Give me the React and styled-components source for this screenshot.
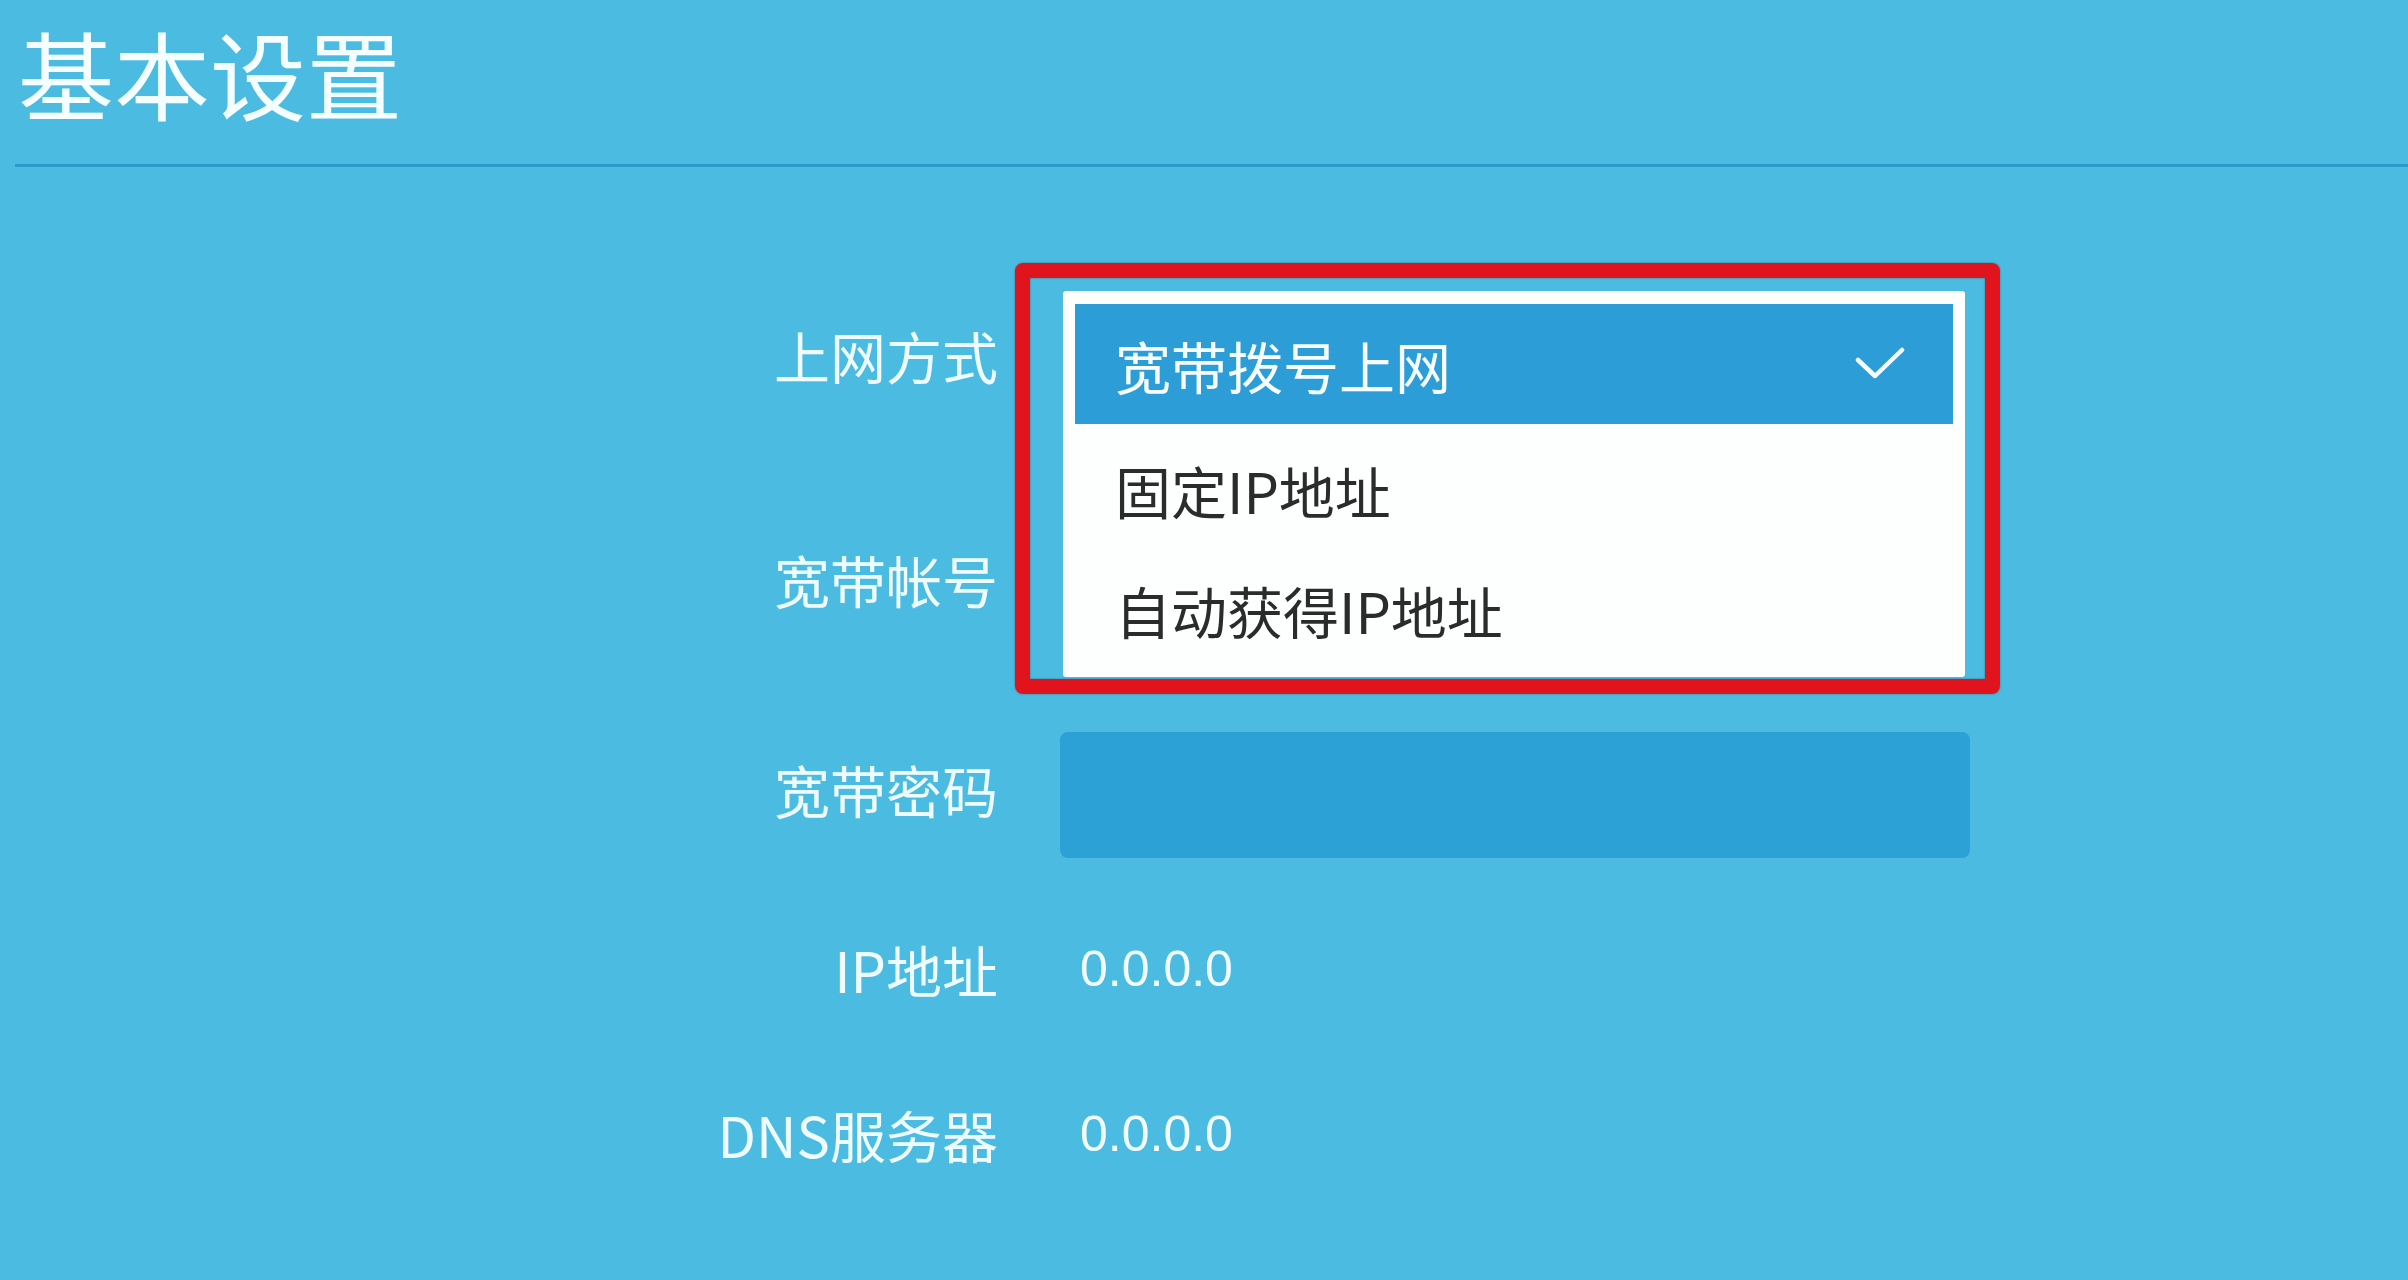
import React from 'react'
import styled, { createGlobalStyle } from 'styled-components'

const GlobalStyle = createGlobalStyle`
  html, body {
    margin: 0;
    padding: 0;
    background: #4cbbe2;
  }
  body {
    font-family: 'Noto Sans CJK SC', 'Noto Sans', sans-serif;
    color: #f2fdff;
  }
`

const Page = styled.div`
  width: 2408px;
  height: 1280px;
  overflow: hidden;
  background: #4cbbe2;
`

const Header = styled.header`
  margin-left: 15px;
  padding: 24px 0 44px 3px;
  border-bottom: 3px solid #2d9acb;
`

const Title = styled.h1`
  margin: 0;
  font-size: 96px;
  line-height: 96px;
  font-weight: 400;
  color: #f4feff;
`

const Form = styled.div`
  margin-top: 79px;
  display: grid;
  grid-template-columns: 998px 910px;
  grid-template-rows: 218px 230px 190px 169px 161px;
  column-gap: 62px;
  align-items: center;
`

const Label = styled.div`
  text-align: right;
  font-size: 56px;
  line-height: 1;
  color: #eefcff;
`

const Field = styled.div`
  position: relative;
  height: 126px;
`

const InputBox = styled.input`
  display: block;
  box-sizing: border-box;
  width: 910px;
  height: 126px;
  margin-top: ${(p) => p.$shift || 0}px;
  border: none;
  outline: none;
  border-radius: 8px;
  background: #2ba1d6;
  padding: 0 30px;
  font-size: 50px;
  color: #fff;
`

const Value = styled.div`
  padding-left: 20px;
  font-family: 'Liberation Sans', Arial, sans-serif;
  font-size: 50px;
  line-height: 1;
  color: #f2fdff;
`

const Menu = styled.ul`
  position: absolute;
  z-index: 2;
  left: 3px;
  top: -1px;
  width: 902px;
  height: 386px;
  margin: 0;
  padding: 13px 12px 0;
  box-sizing: border-box;
  list-style: none;
  background: #fdfefe;
  border-radius: 3px;
`

const Option = styled.li`
  display: flex;
  align-items: center;
  justify-content: space-between;
  height: 120px;
  padding: ${(p) => (p.$active ? '0 48px 0 40px' : '10px 48px 0 40px')};
  box-sizing: border-box;
  font-size: 56px;
  background: ${(p) => (p.$active ? '#2d9dd8' : 'transparent')};
  color: ${(p) => (p.$active ? '#f6feff' : '#2b2b2b')};
`

const Highlight = styled.div`
  position: absolute;
  z-index: 3;
  left: -45px;
  top: -29px;
  width: 985px;
  height: 431px;
  box-sizing: border-box;
  border: 15px solid #e1131c;
  border-radius: 8px;
  box-shadow: 0 0 2px rgba(80, 0, 0, 0.5), inset 0 0 2px rgba(80, 0, 0, 0.5);
  pointer-events: none;
`

const Check = () => (
  <svg width="50" height="34" viewBox="0 0 50 34">
    <polyline
      points="3,13 20,29 47,3"
      fill="none"
      stroke="#f6feff"
      strokeWidth="4.5"
      strokeLinecap="round"
      strokeLinejoin="round"
    />
  </svg>
)

const options = ['宽带拨号上网', '固定IP地址', '自动获得IP地址']

const App = () => {
  return (
    <Page>
      <GlobalStyle />
      <Header>
        <Title>基本设置</Title>
      </Header>
      <Form>
        <Label>上网方式</Label>
        <Field>
          {/* open select: the menu covers the closed field and the account input below */}
          <Menu>
            {options.map((text, i) => (
              <Option key={text} $active={i === 0}>
                <span>{text}</span>
                {i === 0 && <Check />}
              </Option>
            ))}
          </Menu>
          <Highlight />
        </Field>

        <Label>宽带帐号</Label>
        <Field />

        <Label>宽带密码</Label>
        <Field>
          <InputBox type="password" $shift={6} />
        </Field>

        <Label>IP地址</Label>
        <Value>0.0.0.0</Value>

        <Label>DNS服务器</Label>
        <Value>0.0.0.0</Value>
      </Form>
    </Page>
  )
}

export default App
